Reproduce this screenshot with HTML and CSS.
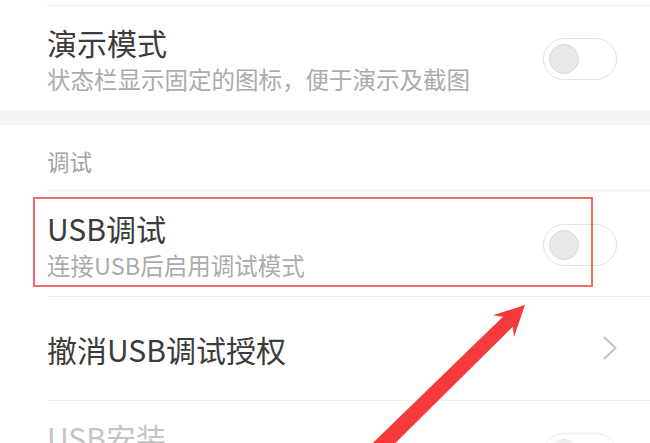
FILE: index.html
```html
<!DOCTYPE html>
<html lang="zh-CN">
<head>
<meta charset="utf-8">
<title>开发者选项</title>
<link rel="stylesheet" href="styles.css">
</head>
<body>
<div class="screen">
  <div class="item stub"></div>

  <div class="item row row-a">
    <div class="row-text">
      <div class="title">演示模式</div>
      <div class="sub">状态栏显示固定的图标，便于演示及截图</div>
    </div>
    <div class="toggle"><span class="knob"></span></div>
  </div>

  <div class="band"></div>

  <div class="item header">调试</div>

  <div class="item row row-b">
    <div class="row-text">
      <div class="title">USB调试</div>
      <div class="sub">连接USB后启用调试模式</div>
    </div>
    <div class="toggle"><span class="knob"></span></div>
  </div>

  <div class="item row row-c">
    <div class="row-text">
      <div class="title">撤消USB调试授权</div>
    </div>
    <svg class="chevron" width="14" height="24" viewBox="0 0 14 24">
      <polyline points="1.5,1.5 12.5,12 1.5,22.5" fill="none" stroke="#c2c2c2" stroke-width="2" stroke-linecap="round" stroke-linejoin="round"/>
    </svg>
  </div>

  <div class="item row row-d">
    <div class="row-text">
      <div class="title title-off">USB安装</div>
      <div class="sub sub-off">允许通过USB安装应用</div>
    </div>
    <div class="toggle toggle-off"><span class="knob"></span></div>
  </div>

  <div class="highlight"></div>

  <svg class="arrow" width="650" height="443" viewBox="0 0 650 443">
    <polygon points="525,305 514,337 512.7,326.8 382.6,455.7 371.4,444.3 502.9,316.8 493,315.3" fill="#f43a3a"/>
  </svg>
</div>
</body>
</html>
```

FILE: styles.css
```css
* {
  box-sizing: border-box;
}

html, body {
  margin: 0;
  padding: 0;
  background: #ffffff;
}

body {
  font-family: "Noto Sans CJK SC", "Noto Sans", sans-serif;
  overflow: hidden;
}

.screen {
  position: relative;
  width: 650px;
  height: 443px;
  overflow: hidden;
  background: #ffffff;
}

.item {
  margin-left: 47px;
  padding-right: 33px;
  border-bottom: 1px solid #ededed;
}

.stub {
  height: 6px;
}

.row {
  display: flex;
  align-items: center;
  justify-content: space-between;
  padding-top: 2px;
}

.row-a {
  height: 104px;
  border-bottom: none;
}

.row-b {
  height: 106px;
}

.row-c {
  height: 104px;
  padding-top: 0;
}

.row-d {
  height: 104px;
  border-bottom: none;
}

.row-text {
  display: flex;
  flex-direction: column;
  gap: 4px;
}

.title {
  font-size: 30px;
  line-height: 36px;
  color: #3b3b3b;
  white-space: nowrap;
}

.title-off {
  color: #c4c4c4;
}

.sub {
  font-size: 23.5px;
  line-height: 30px;
  color: #ababab;
  white-space: nowrap;
}

.sub-off {
  color: #d2d2d2;
}

.band {
  height: 15px;
  background: #f5f5f5;
}

.header {
  height: 66px;
  padding-top: 21px;
  font-size: 22.5px;
  line-height: 30px;
  color: #a3a3a3;
}

.toggle {
  width: 74px;
  height: 42px;
  border-radius: 21px;
  border: 1.5px solid #e3e3e3;
  background: #ffffff;
  display: flex;
  align-items: center;
  padding-left: 4.5px;
  flex: none;
}

.knob {
  width: 30px;
  height: 30px;
  border-radius: 50%;
  background: #e8e8e8;
  border: 1px solid #d8d8d8;
}

.toggle-off {
  border-color: #ececec;
}

.toggle-off .knob {
  background: #f1f1f1;
  border-color: #e4e4e4;
}

.chevron {
  display: block;
  flex: none;
  margin-top: -2px;
}

.highlight {
  position: absolute;
  left: 33px;
  top: 197px;
  width: 560px;
  height: 90px;
  border: 2px solid rgba(236, 70, 70, 0.8);
  pointer-events: none;
}

.arrow {
  position: absolute;
  left: 0;
  top: 0;
  pointer-events: none;
}
```
